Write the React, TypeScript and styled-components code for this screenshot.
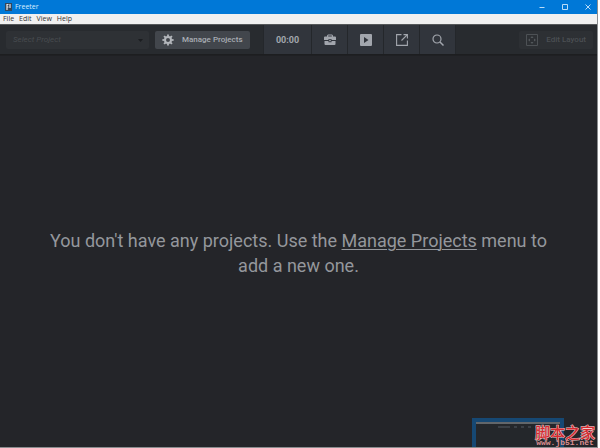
import React from "react";
import styled, { createGlobalStyle } from "styled-components";

const GlobalStyle = createGlobalStyle`
  html, body, #root { height: 100%; }
  body { margin: 0; background: #fff; overflow: hidden; }
  *, *::before, *::after { box-sizing: border-box; }
  button { border: 0; margin: 0; padding: 0; background: none; font: inherit; color: inherit; }
`;

const Window = styled.div`
  position: relative;
  height: 100%;
  margin-right: 2px;
  display: flex;
  flex-direction: column;
  background: #242529;
  border-right: 1px solid #8b8d8f;
  border-bottom: 1px solid #8b8d8f;
  font-family: Roboto, sans-serif;
  overflow: hidden;
`;

const TitleBar = styled.header`
  display: flex;
  align-items: center;
  height: 14px;
  padding: 0 5px;
  background: #0078d7;
  color: #d8ecff;
  flex: none;
`;

const AppTitle = styled.span`
  flex: 1;
  margin-left: 3px;
  font: 7px/12px "Open Sans", sans-serif;
`;

const WindowControls = styled.div`
  display: flex;
  gap: 15px;
`;

const WindowButton = styled.button`
  display: flex;
  width: 8px;
  height: 12px;
  align-items: center;
  justify-content: center;
`;

const MenuBar = styled.nav`
  display: flex;
  align-items: center;
  gap: 5px;
  height: 10px;
  padding-left: 3px;
  background: #f0f0f0;
  color: #333;
  flex: none;
`;

const MenuItem = styled.button`
  && { font: 7px/10px "Open Sans", sans-serif; }
`;

const Toolbar = styled.div`
  display: flex;
  align-items: center;
  height: 31px;
  padding: 0 4px 0 6px;
  background: #282b2f;
  border-top: 1px solid #55585a;
  border-bottom: 1px solid #1d1e20;
  flex: none;
`;

const SelectBox = styled.div`
  position: relative;
  width: 143px;
  height: 18px;
`;

const ProjectSelect = styled.select`
  appearance: none;
  display: block;
  width: 100%;
  height: 100%;
  padding: 0 7px;
  border: 0;
  border-radius: 2px;
  background: #2e3135;
  color: #484c50;
  opacity: 1;
  font: italic 8px Roboto, sans-serif;
`;

const Caret = styled.svg`
  position: absolute;
  right: 6px;
  top: 8px;
`;

const ToolbarButton = styled.button<{ $muted?: boolean }>`
  && {
    display: flex;
    align-items: center;
    gap: 8px;
    height: 18px;
    padding: 0 7px;
    border-radius: 2px;
    background: ${(p) => (p.$muted ? "#2d3034" : "#42464c")};
    color: ${(p) => (p.$muted ? "#4b4f53" : "#a9adb3")};
    margin-left: ${(p) => (p.$muted ? "auto" : "6px")};
    font: 500 8px Roboto, sans-serif;
    white-space: nowrap;
  }
`;

const Tools = styled.div`
  display: flex;
  align-self: stretch;
  margin-left: 13px;
  background: #31353c;
  border-left: 1px solid #24272b;
`;

const Tool = styled.button<{ $wide?: boolean }>`
  && {
    display: flex;
    align-items: center;
    justify-content: center;
    width: ${(p) => (p.$wide ? "48px" : "36px")};
    padding-left: 1px;
    border-right: 1px solid #24272b;
    color: #a2a6ad;
    font: 700 9px Roboto, sans-serif;
  }
`;

const Workspace = styled.main`
  flex: 1;
  display: flex;
  align-items: center;
  justify-content: center;
  padding: 2px 44px 0;
  border-top: 1px solid #1f2023;
`;

const Message = styled.p`
  margin: 0;
  color: #94979c;
  font-size: 18px;
  line-height: 25px;
  text-align: center;
`;

const MessageLink = styled.a`
  color: inherit;
  text-decoration: underline;
  text-decoration-thickness: 1px;
  text-underline-offset: 2px;
`;

const Preview = styled.div`
  position: absolute;
  right: 33px;
  bottom: -1px;
  width: 92px;
  height: 30px;
  padding: 4px 4px 0;
  background: #164873;
`;

const PreviewScreen = styled.div`
  display: flex;
  justify-content: center;
  gap: 4px;
  height: 26px;
  padding-top: 2px;
  border-top: 2px solid #62666a;
  background: #24272b;
`;

const PreviewMark = styled.span<{ $wide?: boolean }>`
  width: ${(p) => (p.$wide ? "12px" : "3px")};
  height: 2px;
  background: #3b4046;
`;

const Watermark = styled.div`
  position: absolute;
  right: 1px;
  bottom: 0;
  width: 62px;
  text-align: center;
  color: #d42a30;
`;

const WatermarkName = styled.div`
  font: 500 15px/15px "Noto Sans CJK SC", sans-serif;
  -webkit-text-stroke: 1px #eccfd0;
  paint-order: stroke fill;
`;

const WatermarkSite = styled.div`
  color: #dd8f90;
  font: 700 8px/8px "Liberation Mono", monospace;
`;

const teeth = [0, 45, 90, 135, 180, 225, 270, 315];

const GearIcon = () => (
  <svg width="12" height="12" viewBox="0 0 12 12" fill="none" stroke="#b4b7bc">
    <circle cx="6" cy="6" r="3" strokeWidth="2" />
    {teeth.map((a) => (
      <path key={a} d="M6 .4v2" strokeWidth="1.8" transform={`rotate(${a} 6 6)`} />
    ))}
  </svg>
);

const BriefcaseIcon = () => (
  <svg width="12" height="12" viewBox="0 0 12 12" fill="currentColor">
    <path d="M4 0.500h4l1 1v1h2a1 1 0 0 1 1 1V6H7.500V5h-3v1H0V3.500a1 1 0 0 1 1-1h2v-1zM4.200 1.500v1h3.600v-1z" fillRule="evenodd" />
    <path d="M5.200 5.700h1.600v1.600H5.200zM.5 7h4v1.200h3V7h4v3a1 1 0 0 1-1 1h-9a1 1 0 0 1-1-1z" />
  </svg>
);

const PlayIcon = () => (
  <svg width="12" height="12" viewBox="0 0 12 12" fill="currentColor">
    <path d="M1 0h10a1 1 0 0 1 1 1v10a1 1 0 0 1-1 1H1a1 1 0 0 1-1-1V1a1 1 0 0 1 1-1zM4 3v6l4.500-3z" fillRule="evenodd" />
  </svg>
);

const ExternalIcon = () => (
  <svg width="12" height="12" viewBox="0 0 12 12" fill="none" stroke="currentColor" strokeWidth="1.100">
    <path d="M5.500.6H.6v10.800h10.800V6.500M7.500.6h3.900v3.900M11.400.6 5.500 6.500" />
  </svg>
);

const SearchIcon = () => (
  <svg width="12" height="12" viewBox="0 0 12 12" fill="none" stroke="currentColor">
    <circle cx="5" cy="5" r="4" strokeWidth="1.200" />
    <path d="m8 8 3.500 3.500" strokeWidth="1.500" />
  </svg>
);

const LayoutIcon = () => (
  <svg width="12" height="12" viewBox="0 0 12 12">
    <path d="M.5.5h11v11H.5z" fill="none" stroke="#4d5155" />
    <path d="M6 2l1.500 2h-3zM6 10l1.500-2h-3zM2 6l2-1.500v3zM10 6 8 4.500v3z" fill="#54585c" />
  </svg>
);

const tools = [
  { label: "Toolbox", Icon: BriefcaseIcon },
  { label: "Run", Icon: PlayIcon },
  { label: "Open externally", Icon: ExternalIcon },
  { label: "Search", Icon: SearchIcon },
];

export default function App() {
  return (
    <>
      <GlobalStyle />
      <Window>
        <TitleBar>
          <svg width="7" height="8" viewBox="0 0 7 8">
            <path d="M0 0h7v8H0z" fill="#34475c" />
            <path d="M2 7V1.500h1.500M2 4h1.500M5 1v4" fill="none" stroke="#e4e8ec" strokeWidth="1.200" />
          </svg>
          <AppTitle>Freeter</AppTitle>
          <WindowControls>
            <WindowButton aria-label="Minimize">
              <svg width="6" height="6" viewBox="0 0 6 6" fill="none" stroke="#b9dcf8"><path d="M.5 3.500h5" /></svg>
            </WindowButton>
            <WindowButton aria-label="Maximize">
              <svg width="6" height="6" viewBox="0 0 6 6" fill="none" stroke="#b9dcf8"><path d="M.5.5h5v5h-5z" /></svg>
            </WindowButton>
            <WindowButton aria-label="Close">
              <svg width="6" height="6" viewBox="0 0 6 6" fill="none" stroke="#b9dcf8"><path d="m.5.5 5 5m0-5-5 5" /></svg>
            </WindowButton>
          </WindowControls>
        </TitleBar>
        <MenuBar aria-label="Application menu">
          {["File", "Edit", "View", "Help"].map((m) => (
            <MenuItem key={m}>{m}</MenuItem>
          ))}
        </MenuBar>
        <Toolbar>
          <SelectBox>
            <ProjectSelect aria-label="Project" disabled>
              <option>Select Project</option>
            </ProjectSelect>
            <Caret width="5" height="3" viewBox="0 0 5 3"><path d="M0 0h5L2.500 3z" fill="#1b1d20" /></Caret>
          </SelectBox>
          <ToolbarButton>
            <GearIcon />
            Manage Projects
          </ToolbarButton>
          <Tools>
            <Tool $wide>00:00</Tool>
            {tools.map(({ label, Icon }) => (
              <Tool key={label} aria-label={label}>
                <Icon />
              </Tool>
            ))}
          </Tools>
          <ToolbarButton $muted disabled>
            <LayoutIcon />
            Edit Layout
          </ToolbarButton>
        </Toolbar>
        <Workspace>
          <Message>
            You don't have any projects. Use the <MessageLink href="#projects">Manage Projects</MessageLink> menu to add a new one.
          </Message>
        </Workspace>
        <Preview>
          <PreviewScreen>
            <PreviewMark $wide />
            <PreviewMark />
            <PreviewMark />
            <PreviewMark />
            <PreviewMark />
          </PreviewScreen>
        </Preview>
        <Watermark>
          <WatermarkName lang="zh-CN">脚本之家</WatermarkName>
          <WatermarkSite>www.jb51.net</WatermarkSite>
        </Watermark>
      </Window>
    </>
  );
}
